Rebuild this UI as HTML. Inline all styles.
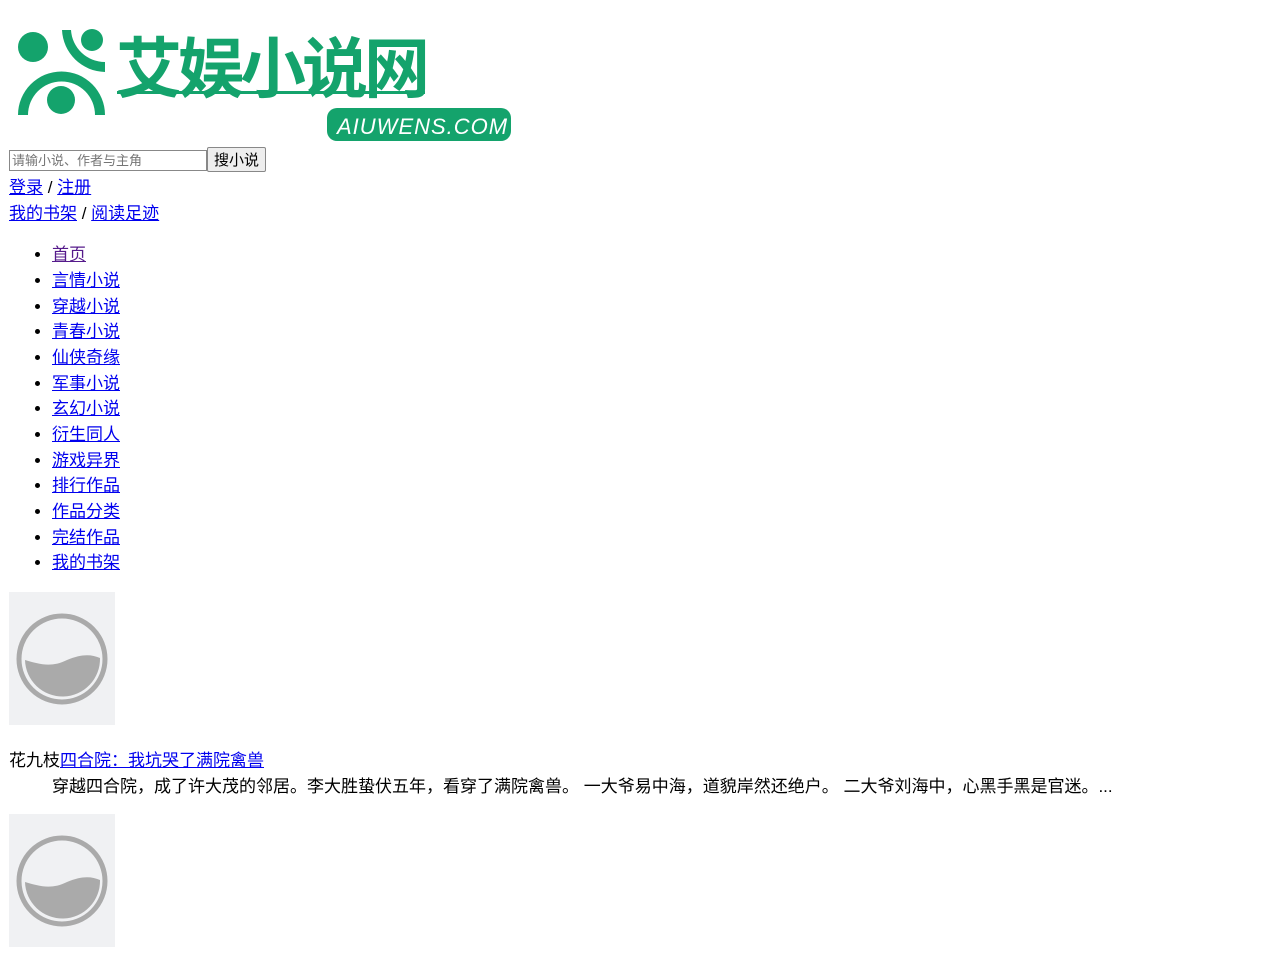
<!DOCTYPE html>
<html><head><meta charset="utf-8"><style>
body{margin:8px 8px 8px 9px;font-family:"Liberation Sans","Noto Sans CJK SC",sans-serif;font-size:17px;line-height:25.67px;color:#000;}
a{color:#00e;}
.logo{position:relative;height:140px;width:510px;margin-left:-1px;}
input{width:192px;height:17px;font-size:13px;padding:1px 2px;border:1px solid #888;margin:0;vertical-align:top;font-family:"Liberation Sans","Noto Sans CJK SC",sans-serif;}
button{height:25px;font-size:15px;margin:-3px 0 0 0;padding:0 6px;vertical-align:top;font-family:"Liberation Sans","Noto Sans CJK SC",sans-serif;border:1px solid #888;border-radius:2px;background:#eee;}
ul{margin:16px 0;padding-left:43px;}
.cover{width:106px;height:133px;background:#f0f1f3;display:block;}
p{margin:0;}
</style></head><body>
<div class="logo">
<svg width="512" height="142" style="position:absolute;left:0;top:0" viewBox="8 8 512 142">
<g fill="#14a36c">
<circle cx="33" cy="47" r="15"/>
<circle cx="92" cy="40" r="11"/>
<path d="M62 30 A44 44 0 0 0 105 72 L105 62 A34 34 0 0 1 71 30 Z"/>
<path d="M18 115 A43 43 0 0 1 105 115 L95 115 A33 33 0 0 0 28 115 Z"/>
<circle cx="61" cy="100" r="14"/>
<rect x="327" y="108" width="184" height="33" rx="10"/>
<rect x="117" y="91" width="308" height="3"/>
</g>
<text x="116" y="92" font-size="66" font-weight="bold" fill="#14a36c" font-family="Noto Sans CJK SC,sans-serif" letter-spacing="-4">艾娱小说网</text>
<text x="337" y="134" font-size="22" font-style="italic" fill="#fff" font-family="Liberation Sans,sans-serif" letter-spacing="1">AIUWENS.COM</text>
</svg>
</div>
<div style="margin-top:2px;height:22px"><input placeholder="请输小说、作者与主角"><button>搜小说</button></div>
<div style="margin-top:3px"><a href="#">登录</a> / <a href="#">注册</a></div>
<div><a href="#">我的书架</a> / <a href="#">阅读足迹</a></div>
<ul>
<li><a href="#" style="color:#551a8b">首页</a></li>
<li><a href="#">言情小说</a></li>
<li><a href="#">穿越小说</a></li>
<li><a href="#">青春小说</a></li>
<li><a href="#">仙侠奇缘</a></li>
<li><a href="#">军事小说</a></li>
<li><a href="#">玄幻小说</a></li>
<li><a href="#">衍生同人</a></li>
<li><a href="#">游戏异界</a></li>
<li><a href="#">排行作品</a></li>
<li><a href="#">作品分类</a></li>
<li><a href="#">完结作品</a></li>
<li><a href="#">我的书架</a></li>
</ul>
<div>
<svg class="cover" width="106" height="133" viewBox="0 0 106 133"><rect width="106" height="133" fill="#f0f1f3"/><circle cx="53" cy="67" r="43" fill="none" stroke="#aaa" stroke-width="5"/><path d="M16 68 C30 72 42 76 58 68 C72 62 82 62 91 66 A37 37 0 0 1 16 68 Z" fill="#aaa"/></svg>
</div>
<div style="margin-top:23px">花九枝<a href="#">四合院：我坑哭了满院禽兽</a></div>
<p style="padding-left:43px">穿越四合院，成了许大茂的邻居。李大胜蛰伏五年，看穿了满院禽兽。 一大爷易中海，道貌岸然还绝户。 二大爷刘海中，心黑手黑是官迷。...</p>
<div style="margin-top:15px">
<svg class="cover" width="106" height="133" viewBox="0 0 106 133"><rect width="106" height="133" fill="#f0f1f3"/><circle cx="53" cy="67" r="43" fill="none" stroke="#aaa" stroke-width="5"/><path d="M16 68 C30 72 42 76 58 68 C72 62 82 62 91 66 A37 37 0 0 1 16 68 Z" fill="#aaa"/></svg>
</div>
</body></html>
